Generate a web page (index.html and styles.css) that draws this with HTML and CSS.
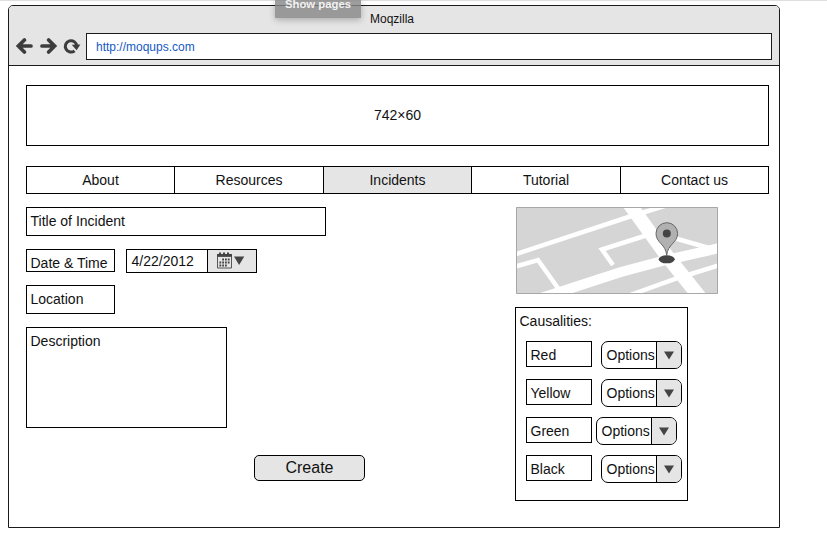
FILE: index.html
```html
<!DOCTYPE html>
<html lang="en">
<head>
<meta charset="utf-8">
<title>Moqzilla</title>
<link rel="stylesheet" href="styles.css">
</head>
<body>
<div class="tooltip">Show pages</div>
<div class="window">
  <header class="chrome">
    <div class="window-title">Moqzilla</div>
    <div class="toolbar">
      <svg class="controls" width="66" height="20" viewBox="0 0 66 20">
        <g fill="none" stroke="#3c3c3c" stroke-width="3.700" stroke-linecap="round">
          <path d="M2.500 10H15M8.400 4L2.400 10L8.400 16"/>
          <path d="M26 10H38.500M32.600 4L38.600 10L32.600 16"/>
          <path stroke-linecap="butt" stroke-width="3" d="M58.600 14.800A5.700 5.700 0 1 1 60.700 9.800"/>
        </g>
        <path fill="#3c3c3c" d="M55.800 8.800L64.400 8.600L60.600 14.200Z"/>
      </svg>
      <div class="url">http://moqups.com</div>
    </div>
  </header>
  <main class="page">
    <div class="banner">742×60</div>
    <nav class="tabs">
      <a>About</a><a>Resources</a><a class="active">Incidents</a><a>Tutorial</a><a>Contact us</a>
    </nav>
    <div class="columns">
      <section class="form">
        <div class="box title">Title of Incident</div>
        <div class="date-row">
          <div class="box date-label">Date &amp; Time</div>
          <div class="datepicker">
            <span class="date-value">4/22/2012</span>
            <span class="date-button">
              <svg width="28" height="18" viewBox="0 0 28 18">
                <path fill="#444" d="M0 2H2V0.500H4V2H6V0.500H8V2H10V0.500H12V2H15V5H0Z"/>
                <path fill="none" stroke="#555" d="M0.500 4.500H14.500V16H0.500Z"/>
                <path fill="none" stroke="#444" stroke-width="1.800" stroke-dasharray="1.800 1" d="M5.200 7.500H13M2.400 10.500H13M2.400 13.500H10.500"/>
                <path fill="#444" d="M17 4.500H27.300L22.100 13Z"/>
              </svg>
            </span>
          </div>
        </div>
        <div class="box location">Location</div>
        <div class="box description">Description</div>
        <div class="create">Create</div>
      </section>
      <aside class="side">
        <svg class="map" width="202" height="87" viewBox="0 0 202 87">
          <path fill="#d5d5d5" d="M0 0H202V87H0Z"/>
          <g fill="none" stroke="#fff">
            <path stroke-width="4.500" d="M-2 47.700L114 9.500L150 -1.500M-2 60L22 53L44 84M130 28.500L86 42.500L97 58M158 31L193 41M114 88L162 71L204 58"/>
            <path stroke-width="10" d="M25 91L105 65L150 53L206 40.500"/>
            <path stroke-width="14" d="M112 -5L151 49L186 93"/>
          </g>
          <ellipse cx="150.700" cy="52.300" rx="8" ry="4" fill="#444"/>
          <path fill="#b1b1b1" stroke="#666" d="M150.700 48.500C150 37 140 36 140 26.500A10.800 10.800 0 0 1 161.600 26.500C161.600 36 151.500 37 150.700 48.500Z"/>
          <circle cx="150.800" cy="26.400" r="4" fill="#444"/>
          <path fill="none" stroke="#a8a8a8" d="M0.500 0.500H201.500V86.500H0.500Z"/>
        </svg>
        <div class="casualties">
          <div class="heading">Causalities:</div>
          <div class="row"><div class="box name">Red</div><div class="select"><span>Options</span><i><svg width="10" height="9"><path d="M0 0.500H10L5 8.500Z"/></svg></i></div></div>
          <div class="row"><div class="box name">Yellow</div><div class="select"><span>Options</span><i><svg width="10" height="9"><path d="M0 0.500H10L5 8.500Z"/></svg></i></div></div>
          <div class="row tight"><div class="box name">Green</div><div class="select"><span>Options</span><i><svg width="10" height="9"><path d="M0 0.500H10L5 8.500Z"/></svg></i></div></div>
          <div class="row"><div class="box name">Black</div><div class="select"><span>Options</span><i><svg width="10" height="9"><path d="M0 0.500H10L5 8.500Z"/></svg></i></div></div>
        </div>
      </aside>
    </div>
  </main>
</div>
</body>
</html>
```

FILE: styles.css
```css
* { box-sizing: border-box; }
body {
  margin: 0;
  height: 543px;
  padding: 4px 0 0 8px;
  border-top: 1px solid #dedede;
  overflow: hidden;
  background: #fff;
  color: #111;
  font: 14px/18px "Liberation Sans", Arial, sans-serif;
}
svg { display: block; }
.tooltip {
  position: absolute;
  left: 275px;
  top: 0;
  width: 86px;
  height: 18px;
  background: rgba(136, 136, 136, .82);
  box-shadow: 0 2px 6px rgba(0, 0, 0, .25);
  color: #f2f2f2;
  font-size: 11.3px;
  font-weight: bold;
  line-height: 9px;
  text-align: center;
}
.window {
  width: 772px;
  height: 523px;
  border: 1px solid #1d1a1c;
  border-radius: 5px 5px 0 0;
}
.chrome {
  height: 60px;
  padding-top: 4px;
  background: #e5e5e5;
  border-bottom: 1px solid #1d1a1c;
  border-radius: 4px 4px 0 0;
}
.window-title {
  height: 23px;
  font-size: 12px;
  text-align: center;
  padding-right: 4px;
}
.toolbar { display: flex; padding-left: 7px; }
.controls { flex: none; margin: 3px 4px 0 0; }
.url {
  width: 686px;
  height: 27px;
  border: 1px solid #1d1a1c;
  background: #fff;
  padding-left: 9px;
  color: #1659c4;
  font-size: 12px;
  line-height: 26px;
}
.page { padding: 19px 10px 0 17px; }
.banner {
  height: 61px;
  border: 1px solid #000;
  line-height: 59px;
  text-align: center;
}
.tabs {
  display: grid;
  grid-template-columns: 147px 149px 148px 149px 148px;
  height: 28px;
  margin-top: 20px;
  border: 1px solid #000;
  line-height: 26px;
  text-align: center;
}
.tabs a + a { border-left: 1px solid #000; }
.tabs .active { background: #e5e5e5; }
.columns { display: flex; justify-content: space-between; margin-top: 13px; }
.form { width: 339px; }
.box { border: 1px solid #000; padding-left: 3.5px; }
.title { width: 300px; height: 29px; line-height: 27px; }
.date-row { display: flex; gap: 11px; margin-top: 13px; }
.date-label { width: 89px; height: 23px; line-height: 26px; white-space: nowrap; }
.datepicker { display: flex; width: 131px; height: 24px; border: 1px solid #000; }
.date-value { width: 80px; padding-left: 4.5px; line-height: 23px; }
.date-button {
  flex: 1;
  padding: 2px 0 0 9px;
  border-left: 1px solid #000;
  background: #e5e5e5;
}
.location { width: 89px; height: 29px; margin-top: 12px; line-height: 27px; }
.description { width: 201px; height: 101px; margin-top: 13px; padding-top: 4px; }
.create {
  width: 111px;
  height: 26px;
  margin: 27px 0 0 228px;
  border: 1px solid #000;
  border-radius: 5px;
  background: #e5e5e5;
  font-size: 16px;
  line-height: 24px;
  text-align: center;
}
.side { width: 254px; }
.map { margin-left: 1px; }
.casualties {
  width: 173px;
  height: 194px;
  margin-top: 13px;
  padding-left: 4px;
  border: 1px solid #000;
}
.heading { height: 33px; padding-top: 4px; text-indent: -0.5px; }
.row { display: flex; gap: 9px; height: 28px; margin: 0 0 10px 6px; }
.tight { gap: 4px; }
.name { width: 66px; height: 26px; line-height: 26px; }
.select {
  display: flex;
  width: 81px;
  height: 28px;
  border: 1px solid #000;
  border-radius: 7px;
  overflow: hidden;
}
.select span { width: 54px; padding-left: 4.5px; line-height: 26px; }
.select i {
  flex: 1;
  padding: 9px 0 0 7px;
  border-left: 1px solid #000;
  background: #e5e5e5;
}
.select path { fill: #444; }
```
